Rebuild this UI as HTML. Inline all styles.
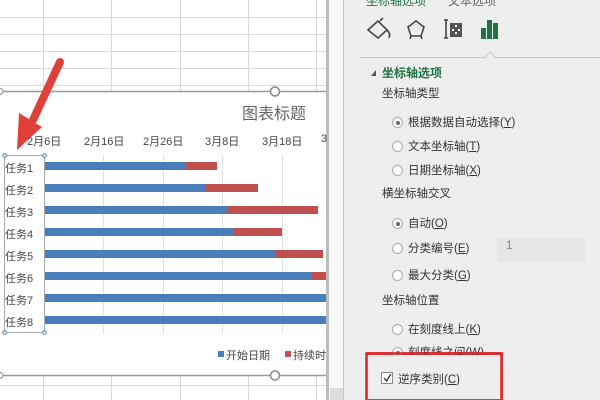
<!DOCTYPE html>
<html><head><meta charset="utf-8"><style>
*{margin:0;padding:0;box-sizing:border-box}
body{width:600px;height:400px;overflow:hidden;position:relative;background:#fff;font-family:"Liberation Sans","Noto Sans CJK SC",sans-serif;color:#333}
.a{position:absolute;white-space:nowrap}
.lbl{font-size:11px;color:#444}
.p{font-size:11.5px;color:#333}
.r{position:absolute;width:11px;height:11px;border:1px solid #aaa;border-radius:50%;background:#fff}
.r.on::after{content:"";position:absolute;left:2.5px;top:2.5px;width:4px;height:4px;border-radius:50%;background:#666}
</style></head><body>
<svg class="a" style="left:0;top:0" width="600" height="400">
<!-- sheet gridlines -->
<g stroke="#d8d8d8" stroke-width="1">
<line x1="0" y1="17.5" x2="326" y2="17.5"/><line x1="0" y1="34.5" x2="326" y2="34.5"/><line x1="0" y1="51.5" x2="326" y2="51.5"/><line x1="0" y1="68.5" x2="326" y2="68.5"/><line x1="0" y1="85.5" x2="326" y2="85.5"/>
<line x1="0" y1="385.5" x2="326" y2="385.5"/>
<line x1="43.5" y1="0" x2="43.5" y2="91"/><line x1="111.5" y1="0" x2="111.5" y2="91"/><line x1="180.5" y1="0" x2="180.5" y2="91"/><line x1="248.5" y1="0" x2="248.5" y2="91"/><line x1="316.5" y1="0" x2="316.5" y2="91"/>
<line x1="43.5" y1="376" x2="43.5" y2="400"/><line x1="111.5" y1="376" x2="111.5" y2="400"/><line x1="180.5" y1="376" x2="180.5" y2="400"/><line x1="248.5" y1="376" x2="248.5" y2="400"/><line x1="316.5" y1="376" x2="316.5" y2="400"/>
</g>
<!-- chart border -->
<line x1="0" y1="91.5" x2="326" y2="91.5" stroke="#999" stroke-width="1.5"/>
<line x1="0" y1="375.5" x2="326" y2="375.5" stroke="#999" stroke-width="1.5"/>
<circle cx="275" cy="91.5" r="4.5" fill="#fff" stroke="#888" stroke-width="1.5"/>
<circle cx="275" cy="375.5" r="4.5" fill="#fff" stroke="#888" stroke-width="1.5"/>
<circle cx="0" cy="91.5" r="3" fill="#fff" stroke="#888"/>
<circle cx="0" cy="375.5" r="3" fill="#fff" stroke="#888"/>
<rect x="326" y="0" width="3" height="400" fill="#bbb"/>
<rect x="329" y="0" width="14" height="400" fill="#f8f8f8"/>
<rect x="330" y="388" width="13" height="12" fill="#ddd"/>
<line x1="343.5" y1="0" x2="343.5" y2="400" stroke="#c8c8c8"/>
<rect x="344" y="0" width="256" height="400" fill="#eeeeee"/>
<!-- plot gridlines -->
<g stroke="#e0e0e0"><line x1="103.5" y1="155" x2="103.5" y2="334"/><line x1="163.5" y1="155" x2="163.5" y2="334"/><line x1="222.5" y1="155" x2="222.5" y2="334"/><line x1="282.5" y1="155" x2="282.5" y2="334"/></g>
<!-- bars -->
<g fill="#4a7ebb">
<rect x="44" y="162" width="142" height="8"/><rect x="44" y="184" width="161" height="8"/><rect x="44" y="206" width="184" height="8"/><rect x="44" y="228" width="190" height="8"/><rect x="44" y="250" width="232" height="8"/><rect x="44" y="272" width="268" height="8"/><rect x="44" y="294" width="282" height="8"/><rect x="44" y="316" width="282" height="8"/>
</g>
<g fill="#c0504d">
<rect x="186" y="162" width="31" height="8"/><rect x="205" y="184" width="53" height="8"/><rect x="228" y="206" width="90" height="8"/><rect x="234" y="228" width="48" height="8"/><rect x="276" y="250" width="47" height="8"/><rect x="312" y="272" width="14" height="8"/>
</g>
<!-- category axis selection -->
<rect x="4.5" y="155.5" width="40" height="177" fill="none" stroke="#aaa"/>
<g fill="#fff" stroke="#4a7ebb"><circle cx="4.5" cy="155.5" r="1.8"/><circle cx="44.5" cy="155.5" r="1.8"/><circle cx="4.5" cy="332.5" r="1.8"/><circle cx="44.5" cy="332.5" r="1.8"/></g>
<!-- legend squares -->
<rect x="218" y="351" width="6" height="6" fill="#4a7ebb"/><rect x="285" y="351" width="6" height="6" fill="#c0504d"/>
<!-- arrow -->
<line x1="60" y1="62" x2="33" y2="120" stroke="#e0403a" stroke-width="8" stroke-linecap="round"/>
<polygon points="17,150 19,113 42,127" fill="#e0403a"/>
<!-- panel separator -->
<polyline points="360,57.5 485,57.5 490,52 495,57.5 600,57.5" fill="none" stroke="#c8c8c8"/>
<polygon points="371,76 376,70 376,76" fill="#555"/>
<!-- icons -->
<g fill="none" stroke="#444" stroke-width="1.6">
<path d="M368 30 L378 21 L387 30 L378 38 Z"/><path d="M380 21 L383 18"/><path d="M387 30 Q391 34 389 38"/>
<path d="M408 27 L416 21 L424 27 L421 36 L411 36 Z"/><path d="M411 36 L410 39 M421 36 L422 39"/>
<path d="M446 20 L446 38 M444 20 L448 20 M444 38 L448 38"/>
</g>
<rect x="450" y="23" width="12" height="14" fill="#555"/>
<g fill="#fff"><rect x="455" y="25" width="2" height="2"/><rect x="452" y="29" width="2" height="2"/><rect x="458" y="29" width="2" height="2"/><rect x="455" y="32" width="2" height="2"/></g>
<g fill="#217346"><rect x="481" y="28" width="5" height="11"/><rect x="487" y="20" width="5" height="19"/><rect x="493" y="23" width="5" height="16"/></g>
<!-- input box -->
<rect x="497" y="238" width="88" height="24" fill="#e6e6e6"/>
<!-- checkbox -->
<rect x="381.5" y="372.5" width="11" height="11" fill="#fff" stroke="#888"/>
<path d="M384 378 L386.5 381 L391 374" fill="none" stroke="#333" stroke-width="1.3"/>
<!-- red rect -->
<rect x="366.5" y="353.5" width="135" height="47" fill="none" stroke="#e02020" stroke-width="2.5"/>
</svg>
<div class="a" style="left:242px;top:100px;font-size:16px;color:#666">图表标题</div>
<div class="a lbl" style="left:27px;top:133px">2月6日</div>
<div class="a lbl" style="left:84px;top:133px">2月16日</div>
<div class="a lbl" style="left:143px;top:133px">2月26日</div>
<div class="a lbl" style="left:205px;top:133px">3月8日</div>
<div class="a lbl" style="left:262px;top:133px">3月18日</div>
<div class="a lbl" style="left:321px;top:133px">3</div>
<div class="a lbl" style="left:5px;top:158px;line-height:22px;font-size:11px">任务1<br>任务2<br>任务3<br>任务4<br>任务5<br>任务6<br>任务7<br>任务8</div>
<div class="a lbl" style="left:226px;top:347px">开始日期</div>
<div class="a lbl" style="left:293px;top:347px">持续时</div>
<div class="a" style="left:366px;top:-8px;font-size:12px;color:#217346">坐标轴选项<span style="color:#666;margin-left:22px">文本选项</span></div>
<div class="a" style="left:382px;top:64px;font-size:12px;font-weight:bold;color:#217346">坐标轴选项</div>
<div class="a p" style="left:382px;top:85px">坐标轴类型</div>
<div class="r on" style="left:392px;top:117px"></div><div class="a p" style="left:408px;top:114px">根据数据自动选择(<u>Y</u>)</div>
<div class="r" style="left:392px;top:141px"></div><div class="a p" style="left:408px;top:138px">文本坐标轴(<u>T</u>)</div>
<div class="r" style="left:392px;top:165px"></div><div class="a p" style="left:408px;top:162px">日期坐标轴(<u>X</u>)</div>
<div class="a p" style="left:382px;top:185px">横坐标轴交叉</div>
<div class="r on" style="left:392px;top:218px"></div><div class="a p" style="left:408px;top:215px">自动(<u>O</u>)</div>
<div class="r" style="left:392px;top:243px"></div><div class="a p" style="left:408px;top:240px">分类编号(<u>E</u>)</div>
<div class="a p" style="left:506px;top:240px;color:#888">1</div>
<div class="r" style="left:392px;top:270px"></div><div class="a p" style="left:408px;top:267px">最大分类(<u>G</u>)</div>
<div class="a p" style="left:382px;top:292px">坐标轴位置</div>
<div class="r" style="left:392px;top:324px"></div><div class="a p" style="left:408px;top:321px">在刻度线上(<u>K</u>)</div>
<div class="r on" style="left:392px;top:347px"></div><div class="a p" style="left:408px;top:344px">刻度线之间(<u>W</u>)</div>
<div class="a" style="left:367px;top:355px;width:134px;height:44px;background:#eeeeee"></div>
<svg class="a" style="left:366px;top:352px" width="137" height="48"><rect x="0.5" y="1.5" width="135" height="47" fill="none" stroke="#e02020" stroke-width="2.5"/><rect x="15.5" y="20.5" width="11" height="11" fill="#fff" stroke="#888"/><path d="M18 26 L20.5 29 L25 22" fill="none" stroke="#333" stroke-width="1.3"/></svg>
<div class="a p" style="left:398px;top:371px">逆序类别(<u>C</u>)</div>
</body></html>
